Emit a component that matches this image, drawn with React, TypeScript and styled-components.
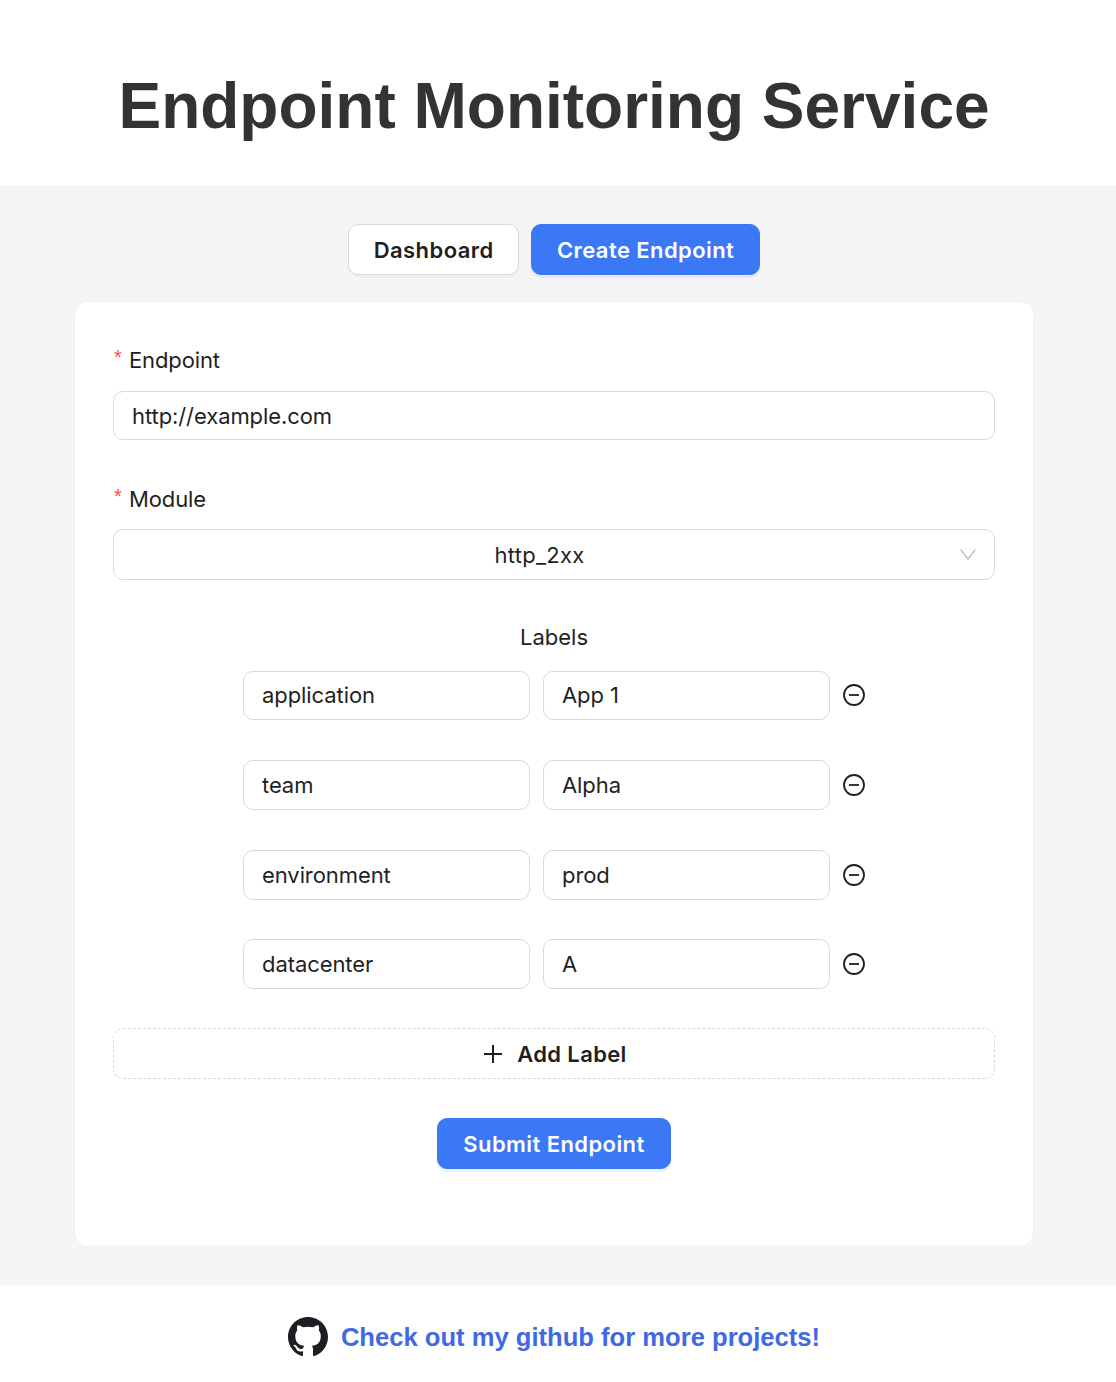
import React from "react";
import styled, { createGlobalStyle } from "styled-components";

const labelRows = [
  { name: "application", value: "App 1" },
  { name: "team", value: "Alpha" },
  { name: "environment", value: "prod" },
  { name: "datacenter", value: "A" },
];

const GlobalStyle = createGlobalStyle`
  html, body {
    margin: 0;
    padding: 0;
    background: #fff;
    font-family: Inter, "Liberation Sans", sans-serif;
    color: #1f1f1f;
  }
  * {
    box-sizing: border-box;
  }
`;

const Header = styled.header`
  height: 186px;
  padding: 25px 8px 0 0;
  display: flex;
  align-items: center;
  justify-content: center;
  background: #fff;
`;

const Title = styled.h1`
  margin: 0;
  font-family: "Liberation Sans", sans-serif;
  font-size: 64px;
  font-weight: 700;
  line-height: 1;
  color: #333;
`;

const Main = styled.main`
  height: 1099px;
  padding: 38px 8px 0 0;
  background: #f5f5f5;
`;

const Nav = styled.nav`
  display: flex;
  justify-content: center;
  gap: 12px;
  margin-bottom: 27px;
`;

const Button = styled.button<{ $primary?: boolean }>`
  height: 51px;
  padding: 0 24.7px;
  border: 1px solid ${(p) => (p.$primary ? "#3b78f6" : "#d9d9d9")};
  border-radius: 10px;
  background: ${(p) => (p.$primary ? "#3b78f6" : "#fff")};
  color: ${(p) => (p.$primary ? "#fff" : "#1f1f1f")};
  box-shadow: 0 3px 0 ${(p) => (p.$primary ? "rgba(59, 120, 246, 0.1)" : "rgba(0, 0, 0, 0.02)")};
  font-family: inherit;
  font-size: 22px;
  font-weight: 600;
  letter-spacing: 0.42px;
`;

const SubmitButton = styled(Button)`
  padding: 0 25.2px;
`;

const Card = styled.section`
  width: 958px;
  height: 944px;
  margin: 0 auto;
  padding: 38px;
  background: #fff;
  border-radius: 13px;
  box-shadow: 0 0 0 1px #f0f0f0;
`;

const FieldLabel = styled.label<{ $top: number }>`
  display: block;
  height: 51px;
  padding-top: ${(p) => p.$top}px;
  font-size: 22px;
  line-height: 32px;
  letter-spacing: -0.12px;
`;

const Star = styled.span`
  display: inline-block;
  width: 16px;
  padding-left: 1px;
  color: #ff4d4f;
  font-family: "Liberation Sans", sans-serif;
  font-size: 20px;
  vertical-align: 4px;
`;

const TextInput = styled.input`
  display: block;
  width: 100%;
  height: 49px;
  padding: 0 18px;
  border: 1px solid #d9d9d9;
  border-radius: 10px;
  outline: none;
  background: #fff;
  color: #1f1f1f;
  font-family: inherit;
  font-size: 22px;
  letter-spacing: -0.08px;
`;

const Field = styled.div`
  margin-bottom: 38px;
`;

const Select = styled.div`
  position: relative;
  height: 51px;
  display: flex;
  align-items: center;
  justify-content: center;
  padding-right: 29px;
  border: 1px solid #d9d9d9;
  border-radius: 10px;
  font-size: 22px;
  letter-spacing: 0.3px;
`;

const Chevron = styled.svg`
  position: absolute;
  right: 18px;
  top: 18px;
  width: 16px;
  height: 13px;
  fill: none;
  stroke: #bfbfbf;
  stroke-width: 1.5;
`;

const LabelsTitle = styled.div`
  margin-top: 45px;
  height: 45.6px;
  text-align: center;
  font-size: 22px;
  line-height: 24px;
`;

const LabelList = styled.div`
  display: flex;
  flex-direction: column;
  gap: 39.8px;
  margin-bottom: 39px;
`;

const LabelRow = styled.div`
  display: flex;
  align-items: center;
  justify-content: center;
  gap: 13px;
  height: 49.8px;
`;

const LabelInput = styled(TextInput)`
  width: 287px;
  height: 100%;
`;

const RemoveIcon = styled.svg`
  width: 24px;
  height: 24px;
  margin: 0 -1px;
  fill: none;
  stroke: #1f1f1f;
  stroke-width: 1.8;
`;

const AddButton = styled.button`
  width: 100%;
  height: 51px;
  display: flex;
  align-items: center;
  justify-content: center;
  gap: 14px;
  padding-left: 8px;
  border: 1px dashed #d9d9d9;
  border-radius: 10px;
  background: #fff;
  color: #1f1f1f;
  font-family: inherit;
  font-size: 22px;
  font-weight: 600;
  letter-spacing: 0.36px;
`;

const PlusIcon = styled.svg`
  width: 20px;
  height: 20px;
  stroke: #1f1f1f;
  stroke-width: 2;
`;

const SubmitRow = styled.div`
  display: flex;
  justify-content: center;
  margin-top: 39px;
`;

const Footer = styled.footer`
  height: 97px;
  padding: 7px 8px 0 0;
  display: flex;
  align-items: center;
  justify-content: center;
  gap: 13px;
  background: #fff;
`;

const GithubLink = styled.a`
  color: #4169e1;
  font-family: "Liberation Sans", sans-serif;
  font-size: 25.6px;
  font-weight: 700;
  text-decoration: none;
`;

const GithubIcon = styled.svg`
  width: 40px;
  height: 40px;
  fill: #1b1f23;
`;

export default function App() {
  return (
    <>
      <GlobalStyle />
      <Header>
        <Title>Endpoint Monitoring Service</Title>
      </Header>
      <Main>
        <Nav>
          <Button>Dashboard</Button>
          <Button $primary>Create Endpoint</Button>
        </Nav>
        <Card>
          <Field>
            <FieldLabel $top={1}>
              <Star>*</Star>Endpoint
            </FieldLabel>
            <TextInput readOnly value="http://example.com" />
          </Field>
          <FieldLabel $top={2}>
            <Star>*</Star>Module
          </FieldLabel>
          <Select>
            http_2xx
            <Chevron viewBox="0 0 16 13">
              <path d="M.5 1.5L8 11l7.5-9.5" />
            </Chevron>
          </Select>
          <LabelsTitle>Labels</LabelsTitle>
          <LabelList>
            {labelRows.map((row) => (
              <LabelRow key={row.name}>
                <LabelInput readOnly value={row.name} />
                <LabelInput readOnly value={row.value} />
                <RemoveIcon viewBox="0 0 24 24">
                  <circle cx="12" cy="12" r="10" />
                  <path d="M7 12h10" />
                </RemoveIcon>
              </LabelRow>
            ))}
          </LabelList>
          <AddButton>
            <PlusIcon viewBox="0 0 20 20">
              <path d="M10 1v18M1 10h18" />
            </PlusIcon>
            Add Label
          </AddButton>
          <SubmitRow>
            <SubmitButton $primary>Submit Endpoint</SubmitButton>
          </SubmitRow>
        </Card>
      </Main>
      <Footer>
        <GithubIcon viewBox="0 0 16 16">
          <path d="M8 0C3.58 0 0 3.58 0 8c0 3.54 2.29 6.53 5.47 7.59.4.07.55-.17.55-.38 0-.19-.01-.82-.01-1.49-2.01.37-2.53-.49-2.69-.94-.09-.23-.48-.94-.82-1.13-.28-.15-.68-.52-.01-.53.63-.01 1.08.58 1.23.82.72 1.21 1.87.87 2.33.66.07-.52.28-.87.51-1.07-1.78-.2-3.64-.89-3.64-3.95 0-.87.31-1.59.82-2.15-.08-.2-.36-1.02.08-2.12 0 0 .67-.21 2.2.82.64-.18 1.32-.27 2-.27s1.36.09 2 .27c1.53-1.04 2.2-.82 2.2-.82.44 1.1.16 1.92.08 2.12.51.56.82 1.27.82 2.15 0 3.07-1.87 3.75-3.65 3.95.29.25.54.73.54 1.48 0 1.07-.01 1.93-.01 2.2 0 .21.15.46.55.38A8.01 8.01 0 0 0 16 8c0-4.42-3.58-8-8-8z" />
        </GithubIcon>
        <GithubLink href="#">Check out my github for more projects!</GithubLink>
      </Footer>
    </>
  );
}
